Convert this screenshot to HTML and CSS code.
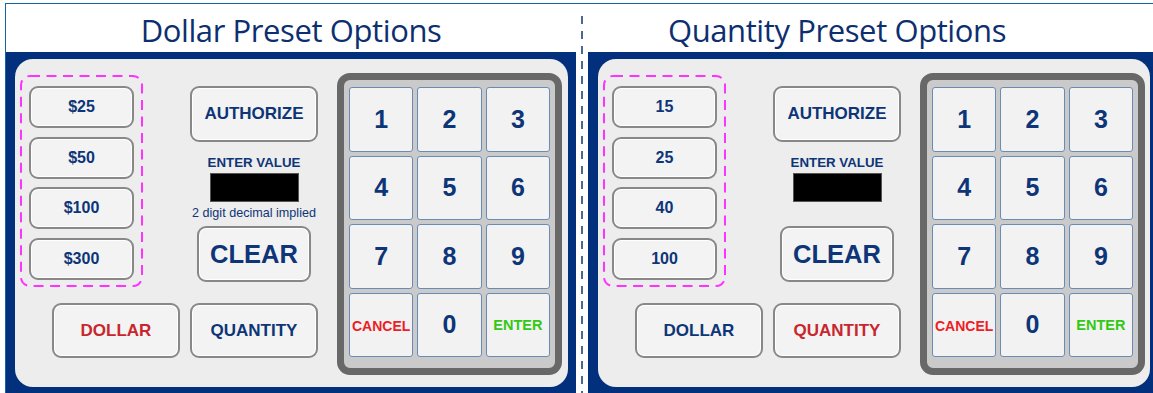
FILE: index.html
```html
<!DOCTYPE html>
<html lang="en">
<head>
<meta charset="utf-8">
<title>Preset Options</title>
<link rel="stylesheet" href="styles.css">
</head>
<body>
<div class="board">
  <section class="panel panel-left">
    <h1 class="title">Dollar Preset Options</h1>
    <div class="frame">
      <div class="pad">
        <div class="left-area">
          <div class="top-row">
            <div class="presets">
              <svg class="dash" width="123" height="212" viewBox="0 0 123 212"><rect x="1" y="1" width="121" height="210" rx="9" ry="9" fill="none" stroke="#ff33ff" stroke-width="2" stroke-dasharray="10 6.5"/></svg>
              <div class="btn preset">$25</div>
              <div class="btn preset">$50</div>
              <div class="btn preset">$100</div>
              <div class="btn preset">$300</div>
            </div>
            <div class="mid">
              <div class="btn auth">AUTHORIZE</div>
              <div class="label">ENTER VALUE</div>
              <div class="display"></div>
              <div class="hint">2 digit decimal implied</div>
              <div class="btn clear">CLEAR</div>
            </div>
          </div>
          <div class="bottom-row">
            <div class="btn mode red">DOLLAR</div>
            <div class="btn mode">QUANTITY</div>
          </div>
        </div>
        <div class="keypad">
          <div class="keys">
            <div class="key">1</div><div class="key">2</div><div class="key">3</div>
            <div class="key">4</div><div class="key">5</div><div class="key">6</div>
            <div class="key">7</div><div class="key">8</div><div class="key">9</div>
            <div class="key cancel">CANCEL</div><div class="key">0</div><div class="key enter">ENTER</div>
          </div>
        </div>
      </div>
    </div>
  </section>
  <div class="divider"><div class="dashline"></div></div>
  <section class="panel panel-right">
    <h1 class="title title-right">Quantity Preset Options</h1>
    <div class="frame">
      <div class="pad">
        <div class="left-area">
          <div class="top-row">
            <div class="presets">
              <svg class="dash" width="123" height="212" viewBox="0 0 123 212"><rect x="1" y="1" width="121" height="210" rx="9" ry="9" fill="none" stroke="#ff33ff" stroke-width="2" stroke-dasharray="10 6.5"/></svg>
              <div class="btn preset">15</div>
              <div class="btn preset">25</div>
              <div class="btn preset">40</div>
              <div class="btn preset">100</div>
            </div>
            <div class="mid">
              <div class="btn auth">AUTHORIZE</div>
              <div class="label">ENTER VALUE</div>
              <div class="display"></div>
              <div class="hint"></div>
              <div class="btn clear">CLEAR</div>
            </div>
          </div>
          <div class="bottom-row">
            <div class="btn mode">DOLLAR</div>
            <div class="btn mode red">QUANTITY</div>
          </div>
        </div>
        <div class="keypad">
          <div class="keys">
            <div class="key">1</div><div class="key">2</div><div class="key">3</div>
            <div class="key">4</div><div class="key">5</div><div class="key">6</div>
            <div class="key">7</div><div class="key">8</div><div class="key">9</div>
            <div class="key cancel">CANCEL</div><div class="key">0</div><div class="key enter">ENTER</div>
          </div>
        </div>
      </div>
    </div>
  </section>
</div>
</body>
</html>
```
FILE: styles.css
```css
* { box-sizing: border-box; }
html, body { margin: 0; padding: 0; }
body {
  width: 1153px;
  height: 393px;
  overflow: hidden;
  background: #ffffff;
  font-family: "Liberation Sans", Arial, sans-serif;
}
.board {
  margin: 3px 0 0 5px;
  border-top: 1px solid #1463a3;
  border-left: 1px solid #1463a3;
  display: flex;
  height: 390px;
  width: 1160px;
}
.panel {
  width: 570px;
  flex: 0 0 570px;
  display: flex;
  flex-direction: column;
}
.title {
  margin: 0;
  height: 48px;
  padding-top: 2px;
  line-height: 48px;
  text-align: center;
  font-family: "Open Sans", sans-serif;
  font-weight: 400;
  font-size: 31px;
  letter-spacing: -0.4px;
  color: #0d2f6f;
  white-space: nowrap;
}
.title-right { padding-right: 72px; }
.frame {
  flex: 1;
  background: #03307c;
  padding: 7px 8px 6px 9px;
}
.panel-right .frame { padding-left: 10px; }
.divider {
  flex: 0 0 12px;
  display: flex;
  justify-content: center;
  padding-top: 12px;
}
.dashline {
  width: 2px;
  height: 100%;
  background: repeating-linear-gradient(to bottom, #4a6795 0 8px, transparent 8px 15px);
}
.pad {
  height: 100%;
  background: #ededed;
  border-radius: 18px;
  padding: 14px 0 0 5px;
  display: flex;
  gap: 19px;
}
.left-area {
  width: 298px;
  display: flex;
  flex-direction: column;
}
.top-row {
  margin-top: 2px;
  display: flex;
  gap: 47px;
}
.presets {
  position: relative;
  width: 123px;
  height: 212px;
  padding: 11px 9px 7px 9px;
  display: flex;
  flex-direction: column;
  justify-content: space-between;
}
.dash {
  position: absolute;
  left: 0;
  top: 0;
}
.btn {
  display: flex;
  align-items: center;
  justify-content: center;
  background: #f3f3f3;
  border: 2px solid #888888;
  border-radius: 9px;
  box-shadow: inset 0 0 0 1px #ffffff;
  color: #0d3577;
  font-weight: 700;
  white-space: nowrap;
}
.preset {
  height: 42px;
  font-size: 16px;
}
.mid {
  width: 128px;
  margin-top: 11px;
  display: flex;
  flex-direction: column;
  align-items: center;
}
.auth {
  width: 128px;
  height: 56px;
  font-size: 17px;
}
.label {
  margin-top: 12.5px;
  line-height: 15px;
  font-size: 13.3px;
  font-weight: 700;
  color: #0d3577;
  white-space: nowrap;
}
.display {
  margin-top: 3.5px;
  width: 89px;
  height: 29px;
  background: #000000;
  border: 1px solid #555555;
}
.hint {
  margin-top: 4px;
  height: 15px;
  line-height: 15px;
  font-size: 12.6px;
  color: #0d3577;
  white-space: nowrap;
}
.clear {
  margin-top: 5px;
  width: 114px;
  height: 56px;
  font-size: 25.5px;
}
.bottom-row {
  margin-top: 16px;
  display: flex;
  justify-content: flex-end;
  gap: 10px;
}
.mode {
  width: 128px;
  height: 55px;
  font-size: 17px;
}
.red { color: #c8262e; }
.keypad {
  width: 225px;
  height: 302px;
  border: 7px solid #686868;
  border-radius: 13px;
  background: #cacaca;
  padding: 7px 5px 11px 5px;
}
.keys {
  height: 100%;
  display: grid;
  grid-template-columns: repeat(3, 1fr);
  grid-template-rows: repeat(4, 1fr);
  gap: 4px;
}
.key {
  display: flex;
  align-items: center;
  justify-content: center;
  background: #f2f2f2;
  border: 1px solid #6a8bb4;
  border-radius: 3px;
  color: #0d3577;
  font-weight: 700;
  font-size: 25px;
}
.cancel {
  color: #ee1c25;
  font-size: 14px;
  padding-top: 3px;
}
.enter {
  color: #33c814;
  font-size: 14.5px;
  padding-top: 1px;
}
```
